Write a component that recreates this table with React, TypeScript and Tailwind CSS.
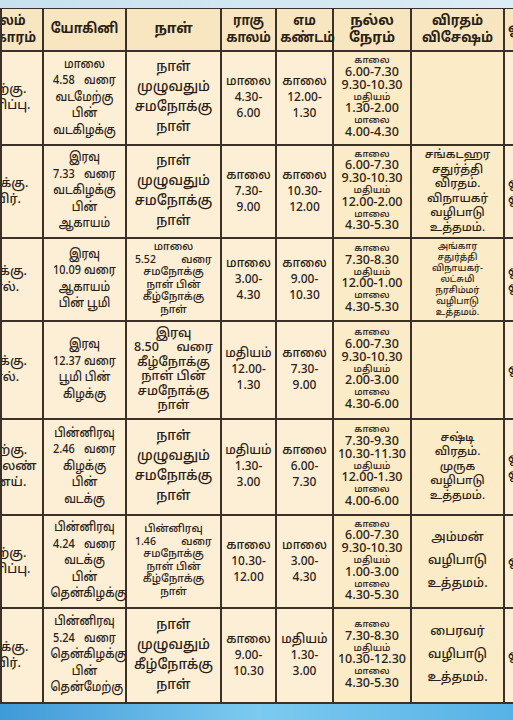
import React from "react"

type Row = {
  h: string
  soolam: string[]
  yogini: string[]
  naal: string[]
  naalSize?: "sm" | "md"
  raagu: string[]
  ema: string[]
  nalla: string[]
  viratham: string[]
  virathamSmall?: boolean
  virathamSpread?: boolean
  extra: string[]
}

const rows: Row[] = [
  {
    h: "h-[94px]",
    soolam: ["மேற்கு.", "இனிப்பு."],
    yogini: ["மாலை", "4.58 வரை", "வடமேற்கு", "பின்", "வடகிழக்கு"],
    naal: ["நாள்", "முழுவதும்", "சமநோக்கு", "நாள்"],
    raagu: ["மாலை", "4.30-", "6.00"],
    ema: ["காலை", "12.00-", "1.30"],
    nalla: ["காலை", "6.00-7.30", "9.30-10.30", "மதியம்", "1.30-2.00", "மாலை", "4.00-4.30"],
    viratham: [],
    extra: [],
  },
  {
    h: "h-[93px]",
    soolam: ["கிழக்கு.", "தயிர்."],
    yogini: ["இரவு", "7.33 வரை", "வடகிழக்கு", "பின்", "ஆகாயம்"],
    naal: ["நாள்", "முழுவதும்", "சமநோக்கு", "நாள்"],
    raagu: ["காலை", "7.30-", "9.00"],
    ema: ["காலை", "10.30-", "12.00"],
    nalla: ["காலை", "6.00-7.30", "9.30-10.30", "மதியம்", "12.00-2.00", "மாலை", "4.30-5.30"],
    viratham: ["சங்கடஹர", "சதுர்த்தி", "விரதம்.", "விநாயகர்", "வழிபாடு", "உத்தமம்."],
    extra: ["ஓ", "ஓ"],
  },
  {
    h: "h-[83px]",
    soolam: ["வடக்கு.", "பால்."],
    yogini: ["இரவு", "10.09 வரை", "ஆகாயம்", "பின் பூமி"],
    naal: ["மாலை", "5.52 வரை", "சமநோக்கு", "நாள் பின்", "கீழ்நோக்கு", "நாள்"],
    naalSize: "sm",
    raagu: ["மாலை", "3.00-", "4.30"],
    ema: ["காலை", "9.00-", "10.30"],
    nalla: ["காலை", "7.30-8.30", "மதியம்", "12.00-1.00", "மாலை", "4.30-5.30"],
    viratham: ["அங்கார", "சதுர்த்தி", "விநாயகர்-", "லட்சுமி", "நரசிம்மர்", "வழிபாடு", "உத்தமம்."],
    virathamSmall: true,
    extra: ["ஓ", "ஓ"],
  },
  {
    h: "h-[98px]",
    soolam: ["வடக்கு.", "பால்."],
    yogini: ["இரவு", "12.37 வரை", "பூமி பின்", "கிழக்கு"],
    naal: ["இரவு", "8.50 வரை", "கீழ்நோக்கு", "நாள் பின்", "சமநோக்கு", "நாள்"],
    naalSize: "md",
    raagu: ["மதியம்", "12.00-", "1.30"],
    ema: ["காலை", "7.30-", "9.00"],
    nalla: ["காலை", "6.00-7.30", "9.30-10.30", "மதியம்", "2.00-3.00", "மாலை", "4.30-6.00"],
    viratham: [],
    extra: ["ஓ"],
  },
  {
    h: "h-[96px]",
    soolam: ["தெற்கு.", "நல்லெண்", "ணெய்."],
    yogini: ["பின்னிரவு", "2.46 வரை", "கிழக்கு", "பின்", "வடக்கு"],
    naal: ["நாள்", "முழுவதும்", "சமநோக்கு", "நாள்"],
    raagu: ["மதியம்", "1.30-", "3.00"],
    ema: ["காலை", "6.00-", "7.30"],
    nalla: ["காலை", "7.30-9.30", "10.30-11.30", "மதியம்", "12.00-1.30", "மாலை", "4.00-6.00"],
    viratham: ["சஷ்டி", "விரதம்.", "முருக", "வழிபாடு", "உத்தமம்."],
    extra: ["ஓ", "ஓ"],
  },
  {
    h: "h-[93px]",
    soolam: ["மேற்கு.", "இனிப்பு."],
    yogini: ["பின்னிரவு", "4.24 வரை", "வடக்கு", "பின்", "தென்கிழக்கு"],
    naal: ["பின்னிரவு", "1.46 வரை", "சமநோக்கு", "நாள் பின்", "கீழ்நோக்கு", "நாள்"],
    naalSize: "sm",
    raagu: ["காலை", "10.30-", "12.00"],
    ema: ["மாலை", "3.00-", "4.30"],
    nalla: ["காலை", "6.00-7.30", "9.30-10.30", "மதியம்", "1.00-3.00", "மாலை", "4.30-5.30"],
    viratham: ["அம்மன்", "வழிபாடு", "உத்தமம்."],
    virathamSpread: true,
    extra: ["ஓ"],
  },
  {
    h: "h-[95px]",
    soolam: ["கிழக்கு.", "தயிர்."],
    yogini: ["பின்னிரவு", "5.24 வரை", "தென்கிழக்கு", "பின்", "தென்மேற்கு"],
    naal: ["நாள்", "முழுவதும்", "கீழ்நோக்கு", "நாள்"],
    raagu: ["காலை", "9.00-", "10.30"],
    ema: ["மதியம்", "1.30-", "3.00"],
    nalla: ["காலை", "7.30-8.30", "மதியம்", "10.30-12.30", "மாலை", "4.30-5.30"],
    viratham: ["பைரவர்", "வழிபாடு", "உத்தமம்."],
    virathamSpread: true,
    extra: ["ஓ"],
  },
]

const labels = ["காலை", "மதியம்", "மாலை"]

function Line({ text }: { text: string }) {
  // "x வரை" lines are spread across the cell in the print
  if (text.includes(" வரை")) {
    const [a, b] = text.split(" ")
    return (
      <div className="flex justify-between px-[3px]">
        <span>{a}</span>
        <span>{b}</span>
      </div>
    )
  }
  return <div className="whitespace-nowrap">{text}</div>
}

const cell = "border-2 border-[#3b3127] p-0 text-center align-middle"

export default function App() {
  return (
    <div
      className="w-[513px] h-[720px] overflow-hidden flex flex-col bg-[#fcefd6] text-[#2a2116] font-medium"
      style={{ fontFamily: '"Noto Sans Tamil", "Noto Sans", "Liberation Sans", sans-serif' }}
    >
      <div className="h-[8px] shrink-0 bg-gradient-to-r from-[#c7e1ef] to-[#dcedf5]" />
      <div className="w-[513px] overflow-hidden shrink-0">
        <table className="w-[560px] table-fixed border-collapse -mt-[1px]">
          <colgroup>
            <col className="w-[42px]" />
            <col className="w-[83px]" />
            <col className="w-[95px]" />
            <col className="w-[55px]" />
            <col className="w-[57px]" />
            <col className="w-[78px]" />
            <col className="w-[93px]" />
            <col className="w-[57px]" />
          </colgroup>
          <thead>
            <tr className="h-[43px] bg-[#f8e6c0] font-bold text-[14px] leading-[17px]">
              <th className={cell}>
                <div className="flex justify-end overflow-hidden">
                  <div className="w-[76px] shrink-0 text-center scale-x-[0.9]">
                    <div>சூலம்</div>
                    <div>பரிகாரம்</div>
                  </div>
                </div>
              </th>
              <th className={cell}>
                <div className="scale-x-[0.9]">யோகினி</div>
              </th>
              <th className={cell}>நாள்</th>
              <th className={cell}>
                <div className="scale-x-[0.88]">
                  <div>ராகு</div>
                  <div>காலம்</div>
                </div>
              </th>
              <th className={cell}>
                <div className="scale-x-[0.88]">
                  <div>எம</div>
                  <div>கண்டம்</div>
                </div>
              </th>
              <th className={cell}>
                <div>நல்ல</div>
                <div>நேரம்</div>
              </th>
              <th className={cell}>
                <div className="scale-x-[0.92]">
                  <div>விரதம்</div>
                  <div>விசேஷம்</div>
                </div>
              </th>
              <th className={cell + " text-left"}>
                <div className="pl-[3px]">ஓ</div>
              </th>
            </tr>
          </thead>
          <tbody>
            {rows.map((r, i) => (
              <tr key={i} className={r.h}>
                <td className={cell}>
                  <div className="flex justify-end overflow-hidden text-[12.5px] leading-[16px]">
                    <div className="w-[80px] shrink-0 text-center">
                      {r.soolam.map((t, j) => (
                        <div key={j}>{t}</div>
                      ))}
                    </div>
                  </div>
                </td>
                <td className={cell}>
                  <div className="text-[13px] leading-[16.5px] scale-x-[0.84]">
                    {r.yogini.map((t, j) => (
                      <Line key={j} text={t} />
                    ))}
                  </div>
                </td>
                <td className={cell}>
                  <div
                    className={
                      r.naalSize === "sm"
                        ? "text-[10.5px] leading-[12.5px] px-[5px]"
                        : r.naalSize === "md"
                        ? "text-[12.5px] leading-[14.5px] px-[4px]"
                        : "text-[13.5px] leading-[20px]"
                    }
                  >
                    {r.naal.map((t, j) => (
                      <Line key={j} text={t} />
                    ))}
                  </div>
                </td>
                <td className={cell}>
                  <div className="text-[13px] leading-[16px] scale-x-[0.92]">
                    {r.raagu.map((t, j) => (
                      <div key={j}>{t}</div>
                    ))}
                  </div>
                </td>
                <td className={cell}>
                  <div className="text-[13px] leading-[16px] scale-x-[0.92]">
                    {r.ema.map((t, j) => (
                      <div key={j}>{t}</div>
                    ))}
                  </div>
                </td>
                <td className={cell + " bg-[#fbebc6]"}>
                  <div className="flex flex-col items-center">
                    {r.nalla.map((t, j) =>
                      labels.includes(t) ? (
                        <div key={j} className="text-[9.5px] leading-[10.5px]">
                          {t}
                        </div>
                      ) : (
                        <div key={j} className="text-[12.5px] leading-[13px] whitespace-nowrap">
                          {t}
                        </div>
                      )
                    )}
                  </div>
                </td>
                <td className={cell + " bg-[#fbebc6]"}>
                  <div
                    className={
                      r.virathamSmall
                        ? "text-[9px] leading-[11px]"
                        : r.virathamSpread
                        ? "text-[12.5px] leading-[23px]"
                        : "text-[11.5px] leading-[14.5px]"
                    }
                  >
                    {r.viratham.map((t, j) => (
                      <div key={j}>{t}</div>
                    ))}
                  </div>
                </td>
                <td className={cell + " text-left"}>
                  <div className="pl-[3px] text-[13px] leading-[16px]">
                    {r.extra.map((t, j) => (
                      <div key={j}>{t}</div>
                    ))}
                  </div>
                </td>
              </tr>
            ))}
          </tbody>
        </table>
      </div>
      <div className="flex-1 bg-gradient-to-r from-[#3f9ad8] via-[#7ccaf0] to-[#56b2e6]" />
    </div>
  )
}
